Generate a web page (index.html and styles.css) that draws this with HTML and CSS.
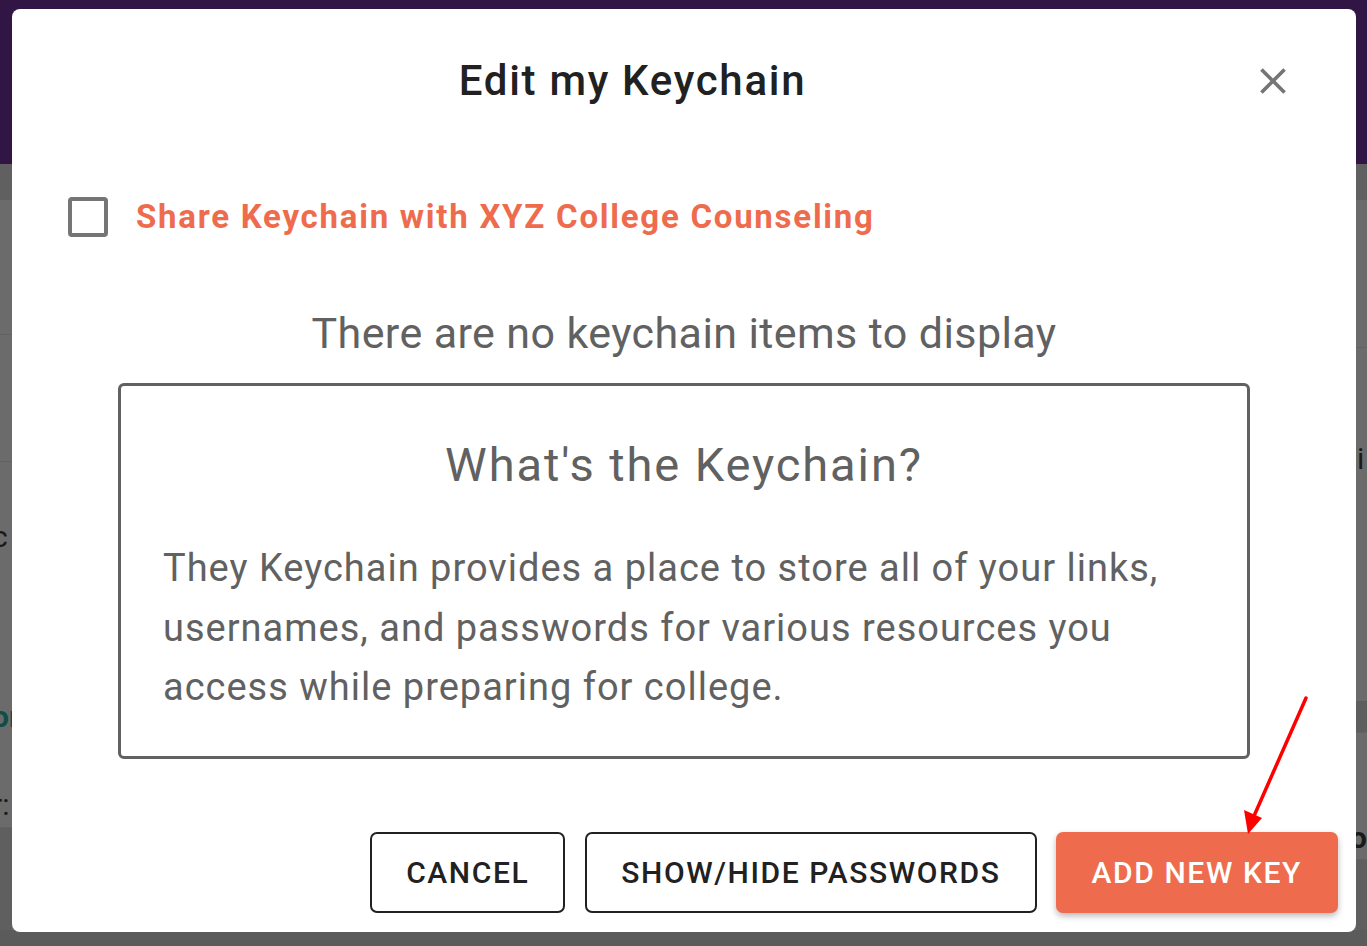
FILE: index.html
```html
<!DOCTYPE html>
<html lang="en">
<head>
<meta charset="utf-8">
<title>Edit my Keychain</title>
<link rel="stylesheet" href="styles.css">
</head>
<body>
<div class="page">
  <header class="topbar"></header>
  <div class="subbar"></div>
  <div class="under">
    <div class="side side-left">
      <div class="srow srow-a"></div>
      <div class="srow srow-b"></div>
      <div class="srow srow-c"><span class="peek">c</span></div>
      <div class="srow srow-d"><span class="peek teal">or</span></div>
      <div class="srow srow-e"><span class="peek">r:</span></div>
      <div class="srow srow-f"></div>
    </div>
    <div class="side side-right">
      <div class="srow srow-ra"></div>
      <div class="srow srow-rb"><span class="peek">i</span></div>
      <div class="srow srow-rc"></div>
      <div class="srow srow-rd"><span class="peek bold">o</span></div>
      <div class="srow srow-re"></div>
    </div>
  </div>
  <div class="footer-strip"></div>
</div>

<div class="modal" role="dialog" aria-labelledby="dlg-title">
  <div class="modal-head">
    <h2 class="modal-title" id="dlg-title">Edit my Keychain</h2>
    <button class="close-btn" aria-label="Close">
      <svg viewBox="0 0 24 24" width="44" height="44"><path d="M19 6.41L17.59 5 12 10.59 6.41 5 5 6.41 10.59 12 5 17.59 6.41 19 12 13.41 17.59 19 19 17.59 13.41 12z" fill="#757575"/></svg>
    </button>
  </div>

  <label class="share-row">
    <span class="checkbox"></span>
    <span class="share-label">Share Keychain with XYZ College Counseling</span>
  </label>

  <p class="empty-msg">There are no keychain items to display</p>

  <div class="info-box">
    <h3 class="info-title">What's the Keychain?</h3>
    <p class="info-text">They Keychain provides a place to store all of your links, usernames, and passwords for various resources you access while preparing for college.</p>
  </div>

  <div class="actions">
    <button class="btn btn-outline">CANCEL</button>
    <button class="btn btn-outline btn-wide">SHOW/HIDE PASSWORDS</button>
    <button class="btn btn-primary">ADD NEW KEY</button>
  </div>
</div>

<svg class="annot-arrow" width="80" height="150" viewBox="0 0 80 150">
  <line x1="66" y1="8" x2="14" y2="126" stroke="#ff0000" stroke-width="3.5" stroke-linecap="round"/>
  <polygon points="8,144 4,120 22,128" fill="#ff0000"/>
</svg>
</body>
</html>
```

FILE: styles.css
```css
* { box-sizing: border-box; }

html, body {
  margin: 0;
  padding: 0;
  width: 1367px;
  height: 946px;
  overflow: hidden;
  font-family: Roboto, "Liberation Sans", sans-serif;
  background: #6b6b6b;
}

.page {
  width: 1367px;
  height: 946px;
  display: flex;
  flex-direction: column;
}

.topbar {
  height: 164px;
  background: #311545;
  flex: none;
}

.subbar {
  height: 36px;
  background: #606060;
  flex: none;
}

.under {
  flex: 1;
  display: flex;
  justify-content: space-between;
}

.footer-strip {
  height: 16px;
  flex: none;
  background: #5b5b5b;
}

.side {
  width: 12px;
  display: flex;
  flex-direction: column;
  overflow: hidden;
}
.side-right { width: 11px; }

.srow {
  flex: none;
  border-bottom: 1px solid #626262;
  overflow: hidden;
  font-size: 30px;
  line-height: 34px;
  color: #1a1a1a;
  white-space: nowrap;
}
.peek { display: block; }
.side-left .peek { margin-left: -8px; }
.side-right .peek { margin-left: 1px; }
.teal { color: #0f4d47; font-weight: 700; }
.side-right .bold { font-weight: 700; margin-left: -6px; }

.srow-a { height: 135px; }
.srow-b { height: 127px; }
.srow-c { height: 158px; padding-top: 58px; border-bottom: none; }
.srow-d { height: 140px; padding-top: 80px; border-bottom: none; }
.srow-e { height: 68px; padding-top: 28px; }
.srow-f { flex: 1; background: #5f5f5f; border-bottom: none; }

.srow-ra { height: 148px; }
.srow-rb { height: 354px; padding-top: 94px; border-bottom-color: #5c5c5c; }
.srow-rc { height: 31px; background: #5e5e5e; }
.srow-rd { height: 127px; padding-top: 88px; }
.srow-re { flex: 1; background: #5f5f5f; border-bottom: none; }

/* Modal */
.modal {
  position: absolute;
  left: 12px;
  top: 9px;
  width: 1344px;
  height: 923px;
  background: #fff;
  border-radius: 8px;
  display: flex;
  flex-direction: column;
  padding: 0 18px 19px 0;
}

.modal-head {
  display: flex;
  align-items: center;
  padding: 48px 21px 0 24px;
}

.modal-title {
  flex: 1;
  margin: 0;
  text-align: center;
  font-size: 42px;
  line-height: 48px;
  font-weight: 500;
  letter-spacing: 1.7px;
  color: #212121;
}

.close-btn {
  width: 88px;
  height: 48px;
  border: none;
  background: transparent;
  padding: 0;
  display: flex;
  align-items: center;
  justify-content: center;
  cursor: pointer;
}

.share-row {
  display: flex;
  align-items: center;
  gap: 28px;
  margin: 92px 0 0 56px;
  height: 40px;
}

.checkbox {
  width: 40px;
  height: 40px;
  border: 4px solid #757575;
  border-radius: 4px;
  flex: none;
}

.share-label {
  font-size: 33px;
  line-height: 40px;
  font-weight: 700;
  letter-spacing: 1.75px;
  color: #ee6c4d;
}

.empty-msg {
  margin: 70px 0 0 18px;
  text-align: center;
  font-size: 43px;
  line-height: 52px;
  letter-spacing: 0.4px;
  color: #616161;
}

.info-box {
  margin: 24px 88px 0 106px;
  border: 3px solid #616161;
  border-radius: 6px;
  padding: 51px 42px 38px;
}

.info-title {
  margin: 0;
  text-align: center;
  font-size: 47px;
  line-height: 56px;
  font-weight: 400;
  letter-spacing: 1.9px;
  color: #616161;
}

.info-text {
  margin: 46px 0 0;
  font-size: 38px;
  line-height: 59.5px;
  letter-spacing: 1px;
  color: #616161;
}

.actions {
  margin-top: auto;
  display: flex;
  justify-content: flex-end;
  gap: 20px;
}

.btn {
  height: 81px;
  padding: 0 34px;
  font-family: Roboto, "Liberation Sans", sans-serif;
  font-size: 30px;
  font-weight: 500;
  letter-spacing: 1.6px;
  border-radius: 7px;
  cursor: pointer;
}

.btn-outline {
  background: #fff;
  color: #212121;
  border: 2px solid #212121;
}

.btn-wide { margin-right: -1px; }

.btn-primary {
  background: #ee6c4d;
  color: #fff;
  border: none;
  padding: 0 36px;
  box-shadow: 0 3px 6px rgba(0, 0, 0, 0.28);
}

.annot-arrow {
  position: absolute;
  left: 1240px;
  top: 690px;
}
```
